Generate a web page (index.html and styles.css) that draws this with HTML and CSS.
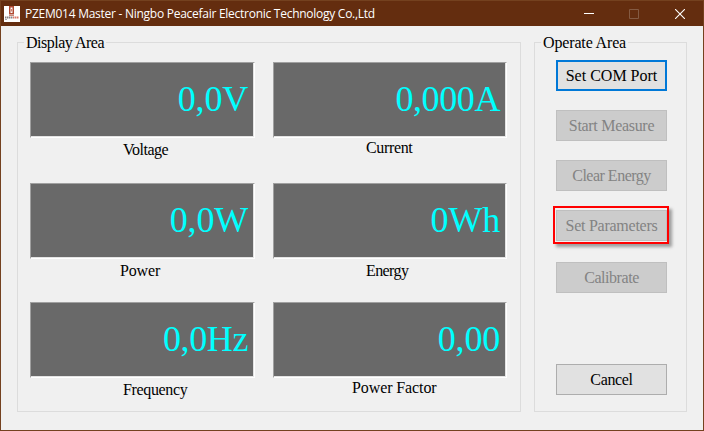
FILE: index.html
```html
<!DOCTYPE html>
<html lang="en">
<head>
<meta charset="utf-8">
<title>PZEM014 Master</title>
<link rel="stylesheet" href="styles.css">
</head>
<body>
<div class="window">
  <header class="titlebar">
    <svg class="app-icon" width="16" height="16" viewBox="0 0 16 16">
      <rect width="16" height="16" fill="#fff"/>
      <path d="M5.75 .75h3.5v7h-3.5z" fill="#fff" stroke="#b04a34" stroke-width="1.5"/>
      <path d="M7.5 3v2.5" stroke="#d08070"/>
      <path d="M5 9.5h5" stroke="#c98a7c"/>
      <path d="M1 11.5h8" stroke="#8a8080" stroke-width="2" stroke-dasharray="1.5 .5"/>
      <path d="M9 11.5h6" stroke="#d87868" stroke-width="2" stroke-dasharray="1.5 .5"/>
      <path d="M1 13.5h2" stroke="#aaa"/>
    </svg>
    <h1 class="title">PZEM014 Master - Ningbo Peacefair Electronic Technology Co.,Ltd</h1>
    <div class="controls">
      <svg class="minimize" width="10" height="10" viewBox="0 0 10 10"><path d="M0 4.5h10" stroke="#fff"/></svg>
      <svg width="10" height="10" viewBox="0 0 10 10"><path d="M.5 .5h9v9h-9z" fill="none" stroke="#845a42"/></svg>
      <svg width="10" height="10" viewBox="0 0 10 10"><path d="M0 0l10 10M10 0L0 10" stroke="#fff" stroke-width="1.1"/></svg>
    </div>
  </header>
  <main class="content">
    <section class="group display">
      <h2 class="legend legend-display">Display Area</h2>
      <div class="meters">
        <div class="meter"><div class="value">0,0V</div><div class="label voltage">Voltage</div></div>
        <div class="meter"><div class="value amps">0,000A</div><div class="label current">Current</div></div>
        <div class="meter"><div class="value">0,0W</div><div class="label power">Power</div></div>
        <div class="meter"><div class="value">0Wh</div><div class="label energy">Energy</div></div>
        <div class="meter"><div class="value hertz">0,0Hz</div><div class="label frequency">Frequency</div></div>
        <div class="meter"><div class="value">0,00</div><div class="label factor">Power Factor</div></div>
      </div>
    </section>
    <section class="group operate">
      <h2 class="legend legend-operate">Operate Area</h2>
      <div class="buttons">
        <button class="btn primary">Set COM Port</button>
        <button class="btn start" disabled>Start Measure</button>
        <button class="btn clear" disabled>Clear Energy</button>
        <div class="marked"><button class="btn params" disabled>Set Parameters</button></div>
        <button class="btn calibrate" disabled>Calibrate</button>
        <button class="btn cancel">Cancel</button>
      </div>
    </section>
  </main>
</div>
</body>
</html>
```

FILE: styles.css
```css
* { box-sizing: border-box; }
body { margin: 0; font: 16px/18px "Liberation Serif", "Times New Roman", serif; color: #000; }
.window { width: 704px; height: 431px; background: #f0f0f0; border: 1px solid #74411f; display: flex; flex-direction: column; }
.titlebar { height: 25px; flex: none; background: #642d0f; display: flex; align-items: center; padding: 0 18px 0 3px; }
.title { margin: 0 0 0 5px; font: 12px/16px "Open Sans", "Noto Sans", sans-serif; color: #fff; white-space: nowrap; letter-spacing: -0.265px; }
.controls { margin-left: auto; display: flex; gap: 36px; }
.minimize { margin-right: -1px; }
.content { display: flex; gap: 13px; padding: 16px 16px 0; }
.group { height: 370px; border: 1px solid #dcdcdc; }
.display { width: 504px; }
.operate { width: 153px; }
.legend { margin: -9px 0 0 6px; width: max-content; height: 18px; padding: 0 2px; background: #f0f0f0; font-size: 16px; font-weight: normal; line-height: 18px; }
.legend-display { letter-spacing: -0.5px; }
.legend-operate { letter-spacing: -0.15px; }
.meters { display: grid; grid-template-columns: 225px 234px; grid-template-rows: 121px 119px 100px; column-gap: 18px; padding: 10px 0 0 12px; }
.value { height: 76px; background: #696969; border: 1px solid; border-color: #a0a0a0 #fff #fff #a0a0a0; box-shadow: inset -1px -1px #e3e3e3; color: #0ff; font-size: 36px; line-height: 73px; text-align: right; padding-right: 6px; letter-spacing: -0.2px; }
.amps, .hertz { letter-spacing: -0.4px; }
.label { white-space: nowrap; }
.voltage { margin: 3px 0 0 93px; letter-spacing: -0.5px; }
.current { margin: 1px 0 0 93px; letter-spacing: -0.35px; }
.power { margin: 3px 0 0 90px; letter-spacing: -0.15px; }
.energy { margin: 3px 0 0 93px; letter-spacing: -0.6px; }
.frequency { margin: 3px 0 0 93px; letter-spacing: -0.35px; }
.factor { margin: 1px 0 0 79px; letter-spacing: -0.1px; }
.buttons { display: flex; flex-direction: column; gap: 19px; padding: 8px 0 0 21px; }
.btn { width: 111px; height: 31px; padding: 0; background: #e1e1e1; border: 1px solid #adadad; color: #000; font: 16px/18px "Liberation Serif", "Times New Roman", serif; white-space: nowrap; }
.btn:disabled { background: #ccc; border-color: #bfbfbf; color: #838383; }
.btn.primary { border: 2px solid #0078d7; }
.start { letter-spacing: -0.3px; }
.clear { letter-spacing: -0.5px; }
.params { letter-spacing: -0.25px; }
.calibrate { letter-spacing: -0.45px; }
.marked { width: 116px; height: 38px; margin: -4px 0 -1px -3px; padding: 2px 0 0 1px; border: 2px solid #f00; box-shadow: 3px 3px 3px rgba(0, 0, 0, 0.35); }
.cancel { margin-top: 52px; letter-spacing: -0.35px; }
```
